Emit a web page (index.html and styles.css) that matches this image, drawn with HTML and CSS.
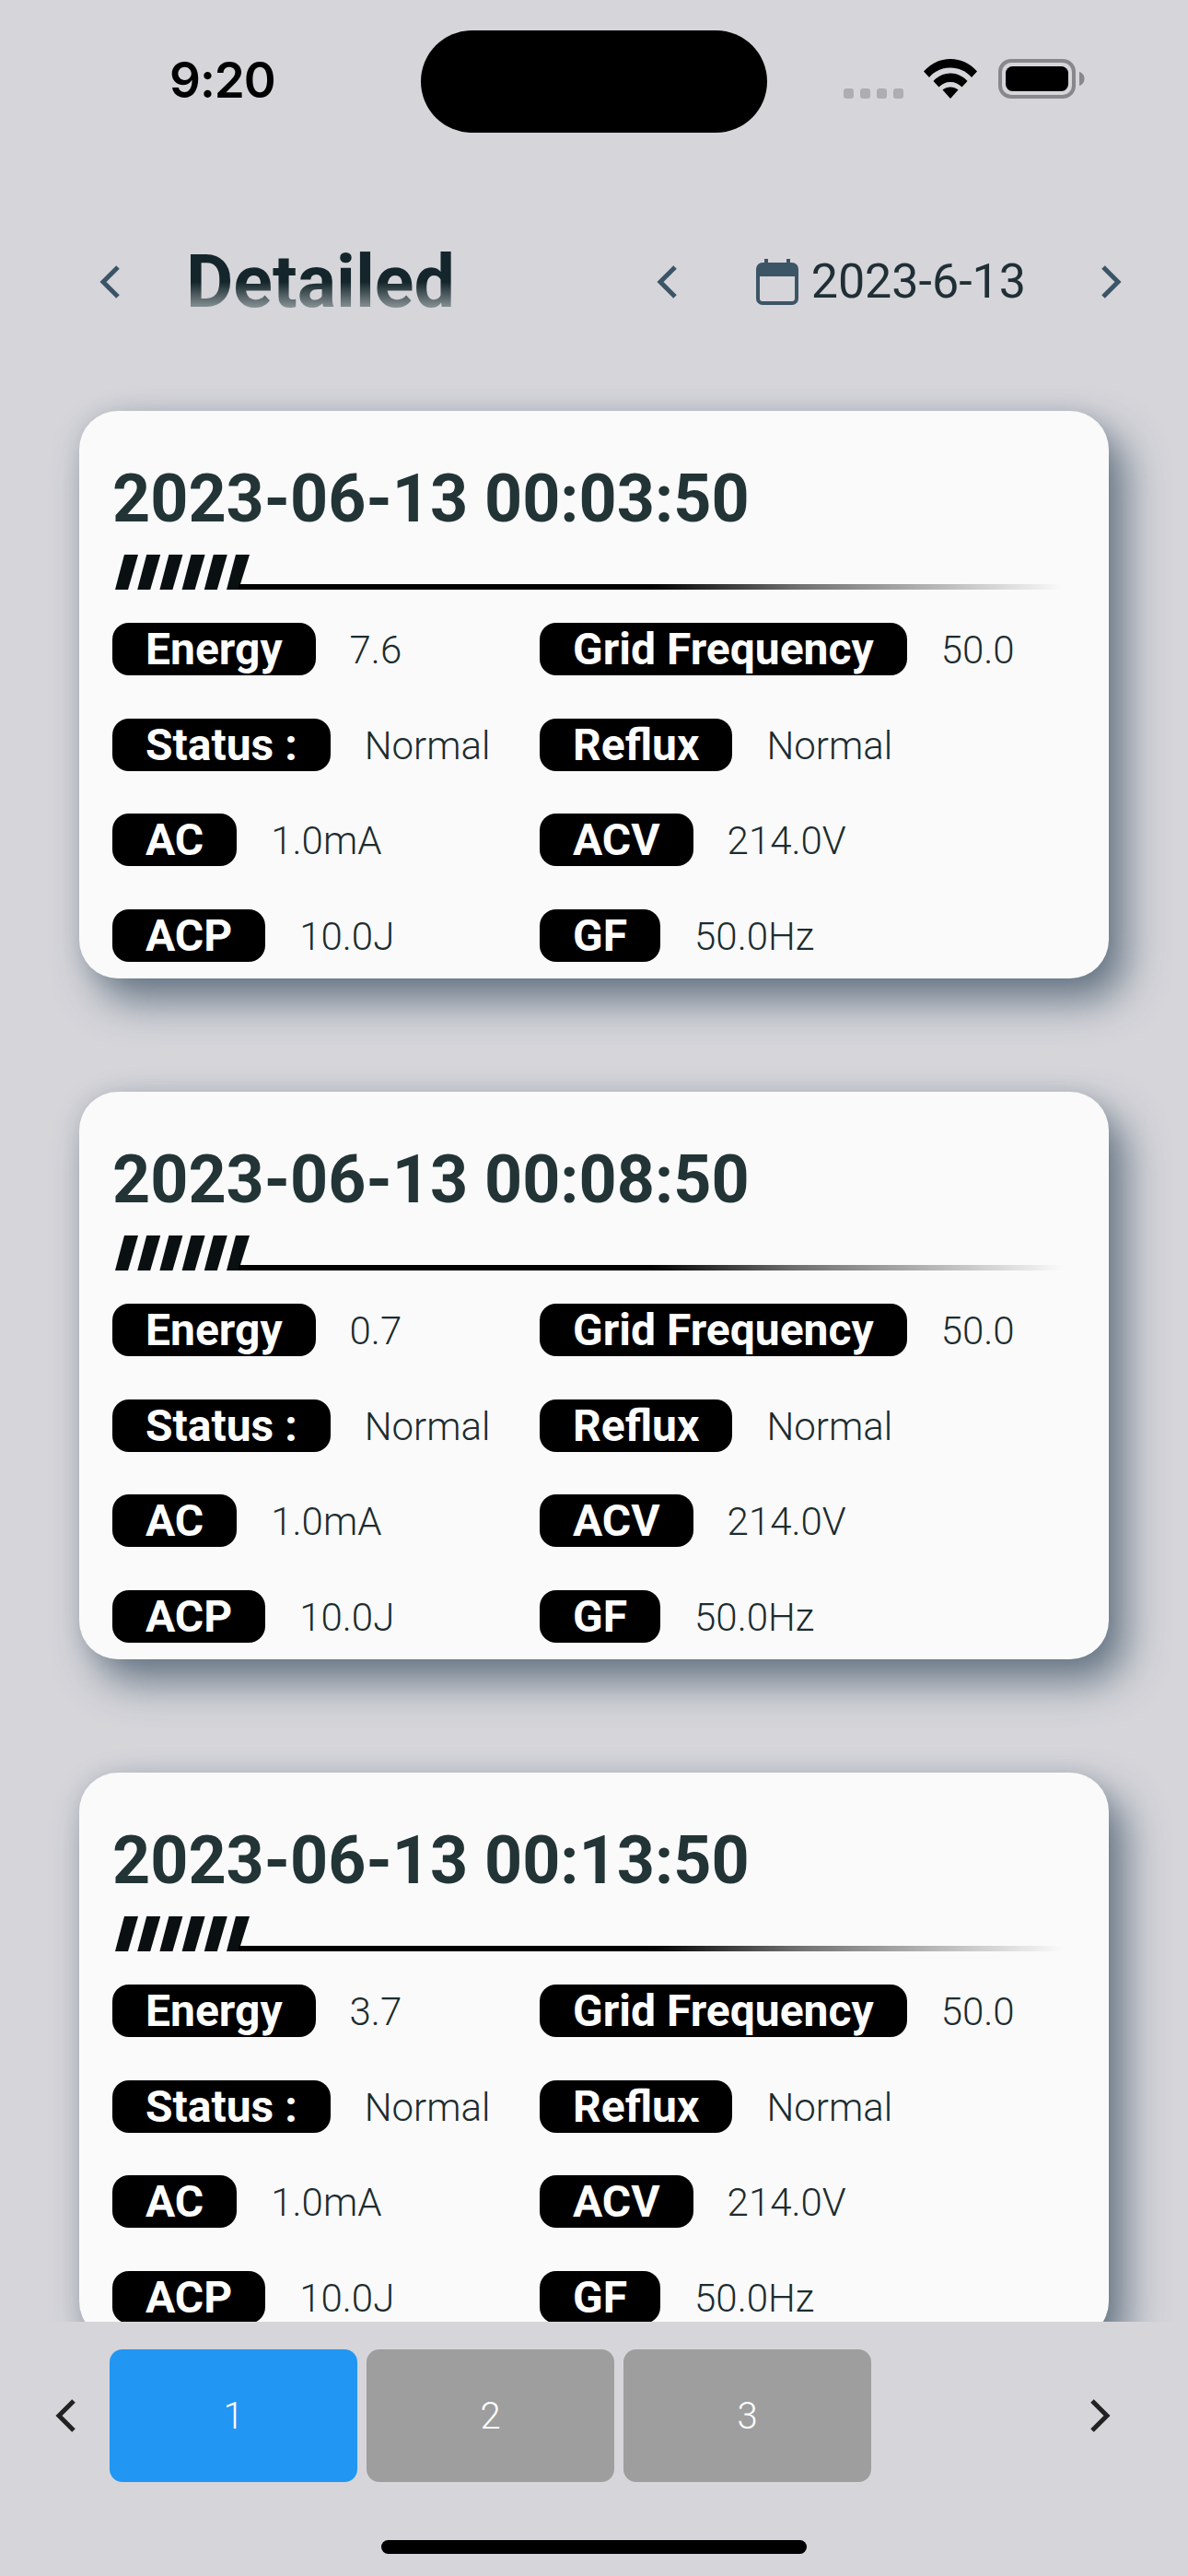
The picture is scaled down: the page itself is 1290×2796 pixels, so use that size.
FILE: index.html
```html
<!DOCTYPE html>
<html lang="en">
<head>
<meta charset="utf-8">
<title>Detailed</title>
<link rel="stylesheet" href="styles.css">
</head>
<body>
<div class="page">
  <div class="status">
    <div class="time">9:20</div>
    <div class="island"></div>
    <div class="sys">
      <div class="signal"><i></i><i></i><i></i><i></i></div>
      <svg class="wifi" width="58" height="43" viewBox="0 0 58 43"><path d="M0 13.5C7.5 5 17.5 0 29 0s21.500 5 29 13.500l-6 6.500C46 13 38 9.500 29 9.500S12 13 6 20z"/><path d="M10.500 24C15.500 18.500 22 15.500 29 15.500s13.500 3 18.500 8.500l-6 6.500C38 27 34 25 29 25s-9 2-12.500 5.500z"/><path d="M20.500 33.500C23 31.500 26 30.500 29 30.500s6 1 8.500 3L29 43z"/></svg>
      <svg class="battery" width="94" height="43" viewBox="0 0 94 43"><rect x="2" y="2" width="80" height="39" rx="12" fill="none" stroke="#88888c" stroke-width="4"/><rect x="8" y="8" width="68" height="27" rx="7.500" fill="#000"/><path d="M88 14c3.500 1 5.500 4 5.500 7.500S91.500 28 88 29z" fill="#88888c"/></svg>
    </div>
  </div>

  <header class="head">
    <div class="head-left">
      <svg class="chev" width="23" height="36" viewBox="0 0 23 36"><path d="M20 2L4 18l16 16"/></svg>
      <h1 class="title">Detailed</h1>
    </div>
    <div class="head-right">
      <svg class="chev" width="23" height="36" viewBox="0 0 23 36"><path d="M20 2L4 18l16 16"/></svg>
      <div class="date">
        <svg class="cal" width="46" height="50" viewBox="0 0 46 50"><rect x="2" y="6" width="42" height="42" rx="5" fill="none" stroke="#3c5566" stroke-width="4"/><rect x="2" y="6" width="42" height="13" fill="#3c5566"/><rect x="9" y="0" width="4" height="8" fill="#3c5566"/><rect x="33" y="0" width="4" height="8" fill="#3c5566"/></svg>
        <span class="date-text">2023-6-13</span>
      </div>
      <svg class="chev" width="23" height="36" viewBox="0 0 23 36"><path d="M3 2l16 16L3 34"/></svg>
    </div>
  </header>

  <main class="list">
    <section class="card">
      <h2 class="stamp">2023-06-13 00:03:50</h2>
      <svg class="rule" width="1030" height="38" viewBox="0 0 1030 38"><defs><linearGradient id="fade" x1="0" x2="1" y1="0" y2="0"><stop offset="0" stop-color="#000"/><stop offset=".5" stop-color="#000"/><stop offset=".68" stop-color="#000" stop-opacity=".55"/><stop offset="1" stop-color="#000" stop-opacity="0"/></linearGradient></defs><path d="M0 38L10 0h15L14 38zM24.200 38L34.200 0h15L38.200 38zM48.400 38L58.400 0h15L62.400 38zM72.600 38L82.600 0h15L86.600 38zM96.800 38L106.800 0h15L110.800 38zM121 38L131 0h15L136 32v6z" fill="#0a1012"/><rect x="134" y="32" width="896" height="6" fill="url(#fade)"/></svg>
      <div class="grid">
        <div class="item"><span class="pill">Energy</span><span class="val">7.6</span></div>
        <div class="item"><span class="pill">Grid Frequency</span><span class="val">50.0</span></div>
        <div class="item"><span class="pill">Status :</span><span class="val">Normal</span></div>
        <div class="item"><span class="pill">Reflux</span><span class="val">Normal</span></div>
        <div class="item"><span class="pill">AC</span><span class="val">1.0mA</span></div>
        <div class="item"><span class="pill">ACV</span><span class="val">214.0V</span></div>
        <div class="item"><span class="pill">ACP</span><span class="val">10.0J</span></div>
        <div class="item"><span class="pill">GF</span><span class="val">50.0Hz</span></div>
      </div>
    </section>
    <section class="card">
      <h2 class="stamp">2023-06-13 00:08:50</h2>
      <svg class="rule" width="1030" height="38" viewBox="0 0 1030 38"><path d="M0 38L10 0h15L14 38zM24.200 38L34.200 0h15L38.200 38zM48.400 38L58.400 0h15L62.400 38zM72.600 38L82.600 0h15L86.600 38zM96.800 38L106.800 0h15L110.800 38zM121 38L131 0h15L136 32v6z" fill="#0a1012"/><rect x="134" y="32" width="896" height="6" fill="url(#fade)"/></svg>
      <div class="grid">
        <div class="item"><span class="pill">Energy</span><span class="val">0.7</span></div>
        <div class="item"><span class="pill">Grid Frequency</span><span class="val">50.0</span></div>
        <div class="item"><span class="pill">Status :</span><span class="val">Normal</span></div>
        <div class="item"><span class="pill">Reflux</span><span class="val">Normal</span></div>
        <div class="item"><span class="pill">AC</span><span class="val">1.0mA</span></div>
        <div class="item"><span class="pill">ACV</span><span class="val">214.0V</span></div>
        <div class="item"><span class="pill">ACP</span><span class="val">10.0J</span></div>
        <div class="item"><span class="pill">GF</span><span class="val">50.0Hz</span></div>
      </div>
    </section>
    <section class="card">
      <h2 class="stamp">2023-06-13 00:13:50</h2>
      <svg class="rule" width="1030" height="38" viewBox="0 0 1030 38"><path d="M0 38L10 0h15L14 38zM24.200 38L34.200 0h15L38.200 38zM48.400 38L58.400 0h15L62.400 38zM72.600 38L82.600 0h15L86.600 38zM96.800 38L106.800 0h15L110.800 38zM121 38L131 0h15L136 32v6z" fill="#0a1012"/><rect x="134" y="32" width="896" height="6" fill="url(#fade)"/></svg>
      <div class="grid">
        <div class="item"><span class="pill">Energy</span><span class="val">3.7</span></div>
        <div class="item"><span class="pill">Grid Frequency</span><span class="val">50.0</span></div>
        <div class="item"><span class="pill">Status :</span><span class="val">Normal</span></div>
        <div class="item"><span class="pill">Reflux</span><span class="val">Normal</span></div>
        <div class="item"><span class="pill">AC</span><span class="val">1.0mA</span></div>
        <div class="item"><span class="pill">ACV</span><span class="val">214.0V</span></div>
        <div class="item"><span class="pill">ACP</span><span class="val">10.0J</span></div>
        <div class="item"><span class="pill">GF</span><span class="val">50.0Hz</span></div>
      </div>
    </section>
  </main>

  <footer class="foot">
    <div class="pager">
      <svg class="chev dark" width="23" height="36" viewBox="0 0 23 36"><path d="M20 2L4 18l16 16"/></svg>
      <div class="pages">
        <div class="pg on">1</div>
        <div class="pg">2</div>
        <div class="pg">3</div>
      </div>
      <svg class="chev dark" width="23" height="36" viewBox="0 0 23 36"><path d="M3 2l16 16L3 34"/></svg>
    </div>
    <div class="home"></div>
  </footer>
</div>
</body>
</html>
```
FILE: styles.css
```css
* { box-sizing: border-box; margin: 0; padding: 0; }
html, body { width: 1290px; height: 2796px; overflow: hidden; }
body { font-family: Roboto, "Noto Sans", sans-serif; background: #d5d5da; color: #233436; }
.page { width: 1290px; height: 2796px; display: flex; flex-direction: column; }

.status { height: 144px; padding: 33px 112px 0 184px; display: grid; grid-template-columns: 273px 376px 1fr; align-items: center; }
.time { font-family: Inter, sans-serif; font-weight: 600; font-size: 53px; line-height: 60px; color: #000; letter-spacing: -1px; margin-top: -3px; }
.island { height: 111px; background: #000; border-radius: 56px; }
.sys { display: flex; align-items: flex-end; justify-content: flex-end; margin-top: -6px; height: 43px; }
.signal { display: flex; gap: 7px; margin-right: 22px; }
.signal i { display: block; width: 11px; height: 11px; border-radius: 3px; background: #aeaeb2; }
.wifi { fill: #000; margin-right: 23px; }

.head { margin-top: 100px; height: 124px; padding: 0 72px 0 108px; display: flex; align-items: center; justify-content: space-between; }
.head-left { display: flex; align-items: center; gap: 71px; }
.title { font-size: 79px; line-height: 90px; font-weight: 700; background: linear-gradient(to bottom, #14262b 0 50%, #9aa3a6 86%); -webkit-background-clip: text; background-clip: text; color: transparent; }
.head-right { display: flex; align-items: center; }
.date { display: flex; align-items: center; gap: 14px; margin: 0 81px 0 85px; }
.date-text { font-size: 52px; line-height: 60px; color: #1f2f35; }
.chev { fill: none; stroke: #3c5566; stroke-width: 5; flex: none; }
.chev.dark { stroke: #222; }

.list { flex: 1; min-height: 0; overflow: hidden; padding: 78px 86px 0; display: flex; flex-direction: column; gap: 123px; }
.card { flex: none; height: 616px; background: #fafafa; border-radius: 42px; padding: 53px 36px 0; box-shadow: 18px 24px 44px rgba(58, 80, 98, .7), 0 0 20px rgba(58, 80, 98, .14); }
.stamp { font-size: 71.800px; line-height: 86px; font-weight: 700; color: #233436; }
.rule { display: block; margin: 17px 0 0 3px; }
.grid { display: grid; grid-template-columns: 464px 1fr; grid-auto-rows: 103.500px; margin-top: 36px; }
.item { display: flex; align-items: flex-start; gap: 37px; }
.pill { height: 57px; padding: 0 36px; background: #000; border-radius: 18px; color: #fff; font-size: 48px; line-height: 57px; font-weight: 700; }
.val { font-size: 42px; line-height: 59px; font-weight: 300; color: #1c2c2f; }

.foot { flex: none; height: 276px; background: #d5d5da; position: relative; padding-top: 30px; }
.pager { display: flex; align-items: center; height: 144px; padding: 0 84px 0 60px; justify-content: space-between; }
.pages { flex: 1; display: flex; gap: 10px; margin-left: 36px; }
.pg { width: 269px; height: 144px; border-radius: 14px; background: #9e9e9e; color: #fff; font-size: 40px; font-weight: 300; display: flex; align-items: center; justify-content: center; }
.pg.on { background: #2196f3; }
.home { width: 462px; height: 15px; margin: 63px auto 0; border-radius: 8px; background: #000; }
```
